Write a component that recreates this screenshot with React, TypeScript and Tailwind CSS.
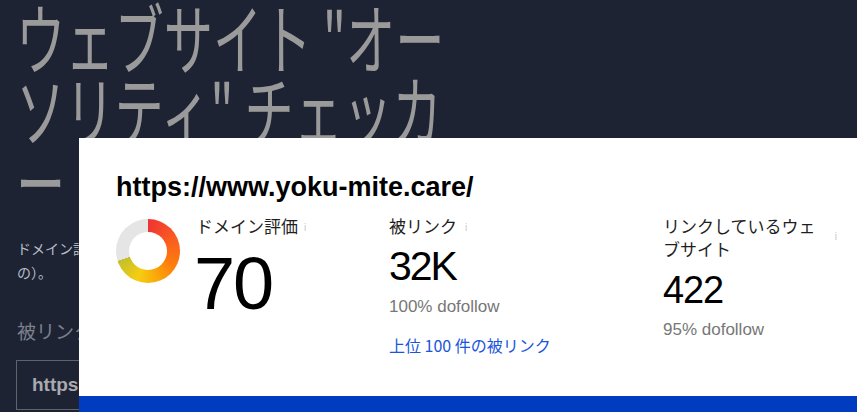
import React from "react";

const cjk = "font-['Noto_Sans_CJK_JP','Noto_Sans',sans-serif]";
const arial = "font-['Liberation_Sans','Noto_Sans_CJK_JP',sans-serif]";

function InfoMark({ className = "" }: { className?: string }) {
  return (
    <span
      className={`${arial} text-[10px] leading-none text-[#c8c8c8] select-none ${className}`}
    >
      i
    </span>
  );
}

export default function App() {
  return (
    <div className="relative w-[857px] h-[412px] overflow-hidden bg-[#1e2333]">
      {/* background page */}
      <div className="pl-[16px]">
        <h1
          className={`${cjk} text-[77px] leading-[72px] font-normal text-[#9a9a9a] whitespace-nowrap origin-left scale-x-[0.64] w-[1200px]`}
        >
          <div>ウェブサイト "オー</div>
          <div>ソリティ" チェッカ</div>
          <div>ー</div>
        </h1>
        <p className={`${cjk} pl-[1px] mt-[20px] text-[14px] leading-[24px] text-[#b7bdc8] whitespace-nowrap`}>
          ドメイン評価（DR）は、ウェブサイトの被リンクプロファイルの強さを示します（0〜100 のスケールで測定されるも
          <br />
          の）。
        </p>
        <div className={`${cjk} pl-[1px] mt-[33px] text-[19px] leading-[28px] text-[#7b818c] whitespace-nowrap`}>
          被リンクをチェックするウェブサイトまたは URL を入力してください
        </div>
        <div className="mt-[15px] h-[50px] w-[700px] border border-[#5f636c] flex items-center pl-[15px]">
          <span className={`${arial} text-[19px] font-bold text-[#a9aab0]`}>https://www.yoku-mite.care/</span>
        </div>
      </div>

      {/* result card overlay */}
      <div className="absolute left-[79px] top-[138px] right-0 bottom-0 bg-white flex flex-col">
        <div className="flex-1 pl-[37px] pt-[33px]">
          <div className={`${arial} text-[27px] leading-[32px] font-bold text-black`}>
            https://www.yoku-mite.care/
          </div>
          <div className="mt-[11px] grid grid-cols-[273px_274px_190px]">
            {/* domain rating */}
            <div className="flex">
              <div className="mt-[5px] w-16 h-16 rounded-full bg-[conic-gradient(#ef3333_0deg,#f95a22_60deg,#fe7d0c_120deg,#f9b10a_170deg,#f6cd12_200deg,#c3c02b_252deg,#e5e5e5_252deg)] flex items-center justify-center shrink-0">
                <div className="w-[38px] h-[38px] rounded-full bg-white" />
              </div>
              <div className="ml-[16px] flex flex-col">
                <div className="flex">
                  <span className={`${cjk} text-[17px] leading-[24px] text-[#1f1f1f]`}>ドメイン評価</span>
                  <InfoMark className="ml-[6px] mt-[9px]" />
                </div>
                <div className={`${arial} mt-[9px] -ml-[2px] text-[74px] leading-none tracking-[-0.03em] text-black`}>70</div>
              </div>
            </div>

            {/* backlinks */}
            <div className="flex flex-col">
              <div className="flex">
                <span className={`${cjk} text-[17px] leading-[24px] text-[#1f1f1f]`}>被リンク</span>
                <InfoMark className="ml-[8px] mt-[9px]" />
              </div>
              <div className={`${arial} mt-[8px] text-[41px] leading-none tracking-[-0.05em] text-black`}>32K</div>
              <div className={`${arial} mt-[8px] text-[17px] leading-[24px] text-[#777777]`}>100% dofollow</div>
              <a className={`${cjk} mt-[14px] text-[16px] leading-[24px] text-[#1a56db]`}>
                上位 100 件の被リンク
              </a>
            </div>

            {/* referring domains */}
            <div className="flex flex-col">
              <div className="flex justify-between">
                <span className={`${cjk} w-[162px] text-[17px] leading-[23px] text-[#1f1f1f]`}>
                  リンクしているウェブサイト
                </span>
                <InfoMark className="mt-[18px] mr-[16px]" />
              </div>
              <div className={`${arial} mt-[11px] text-[38px] leading-none tracking-[-0.03em] text-black`}>422</div>
              <div className={`${arial} mt-[9px] text-[17px] leading-[24px] text-[#777777]`}>95% dofollow</div>
            </div>
          </div>
        </div>
        <div className="h-[16px] bg-[#003cc0]" />
      </div>
    </div>
  );
}
